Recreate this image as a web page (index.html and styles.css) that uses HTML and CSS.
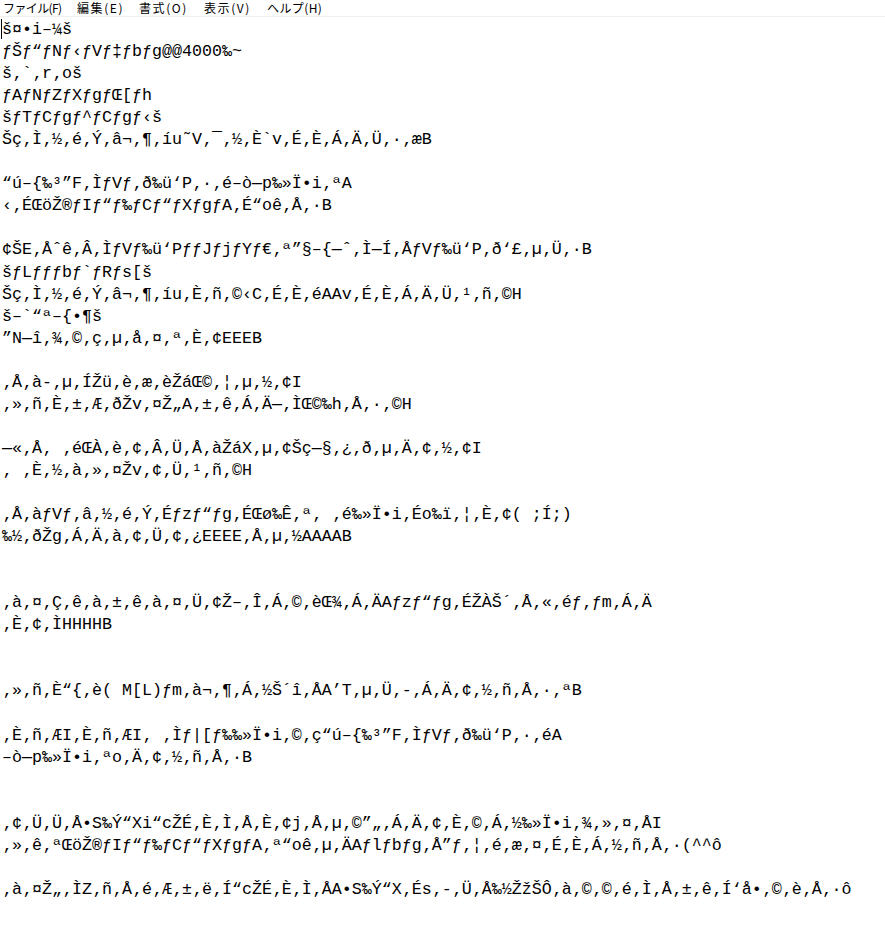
FILE: index.html
```html
<!DOCTYPE html>
<html lang="ja">
<head>
    <meta charset="UTF-8">
    <title>メモ帳</title>
    <link rel="stylesheet" href="styles.css">
</head>
<body>
<div class="window">
    <div class="menu">
        <span class="menu-item file">ファイル(F)</span>
        <span class="menu-item edit">編集(E)</span>
        <span class="menu-item format">書式(O)</span>
        <span class="menu-item view">表示(V)</span>
        <span class="menu-item help">ヘルプ(H)</span>
    </div>

    <div class="editor"><span class="caret"></span>š¤•i–¼š
ƒŠƒ“ƒNƒ‹ƒVƒ‡ƒbƒg@@4000‰~
š‚`‚r‚oš
ƒAƒNƒZƒXƒgƒŒ[ƒh
šƒTƒCƒgƒ^ƒCƒgƒ‹š
Šç‚Ì‚½‚é‚Ý‚â¬‚¶‚íu˜V‚¯‚½‚È`v‚É‚È‚Á‚Ä‚Ü‚·‚æB

“ú–{‰³”F‚ÌƒVƒ‚ð‰ü‘P‚·‚é–ò—p‰»Ï•i‚ªA
‹‚ÉŒöŽ®ƒIƒ“ƒ‰ƒCƒ“ƒXƒgƒA‚É“oê‚Å‚·B

¢ŠE‚Åˆê‚Â‚ÌƒVƒ‰ü‘PƒƒJƒjƒYƒ€‚ª”§–{—ˆ‚Ì—Í‚ÅƒVƒ‰ü‘P‚ð‘£‚µ‚Ü‚·B
šƒLƒƒƒbƒ`ƒRƒs[š
Šç‚Ì‚½‚é‚Ý‚â¬‚¶‚íu‚È‚ñ‚©‹C‚É‚È‚éAAv‚É‚È‚Á‚Ä‚Ü‚¹‚ñ‚©H
š–`“ª–{•¶š
”N—î‚¾‚©‚ç‚µ‚å‚¤‚ª‚È‚¢EEEB

‚Å‚à-‚µ‚ÍŽü‚è‚æ‚èŽáŒ©‚¦‚µ‚½‚¢I
‚»‚ñ‚È‚±‚Æ‚ðŽv‚¤Ž„A‚±‚ê‚Á‚Ä—‚ÌŒ©‰h‚Å‚·‚©H

—«‚Å‚ ‚éŒÀ‚è‚¢‚Â‚Ü‚Å‚àŽáX‚µ‚¢Šç—§‚¿‚ð‚µ‚Ä‚¢‚½‚¢I
‚ ‚È‚½‚à‚»‚¤Žv‚¢‚Ü‚¹‚ñ‚©H

‚Å‚àƒVƒ‚â‚½‚é‚Ý‚Éƒzƒ“ƒg‚ÉŒø‰Ê‚ª‚ ‚é‰»Ï•i‚Éo‰ï‚¦‚È‚¢( ;Í;)
‰½‚ðŽg‚Á‚Ä‚à‚¢‚Ü‚¢‚¿EEEE‚Å‚µ‚½AAAAB


‚à‚¤‚Ç‚ê‚à‚±‚ê‚à‚¤‚Ü‚¢Ž–‚Î‚Á‚©‚èŒ¾‚Á‚ÄAƒzƒ“ƒg‚ÉŽÀŠ´‚Å‚«‚éƒ‚ƒm‚Á‚Ä
‚È‚¢‚ÌHHHHB


‚»‚ñ‚È“{‚è( M[L)ƒm‚à¬‚¶‚Á‚½Š´î‚ÅA’T‚µ‚Ü‚-‚Á‚Ä‚¢‚½‚ñ‚Å‚·‚ªB

‚È‚ñ‚ÆI‚È‚ñ‚ÆI‚ ‚Ìƒ|[ƒ‰‰»Ï•i‚©‚ç“ú–{‰³”F‚ÌƒVƒ‚ð‰ü‘P‚·‚éA
–ò—p‰»Ï•i‚ªo‚Ä‚¢‚½‚ñ‚Å‚·B


‚¢‚Ü‚Ü‚Å•S‰Ý“Xi“cŽÉ‚È‚Ì‚Å‚È‚¢j‚Å‚µ‚©”„‚Á‚Ä‚¢‚È‚©‚Á‚½‰»Ï•i‚¾‚»‚¤‚ÅI
‚»‚ê‚ªŒöŽ®ƒIƒ“ƒ‰ƒCƒ“ƒXƒgƒA‚ª“oê‚µ‚ÄAƒlƒbƒg‚Å”ƒ‚¦‚é‚æ‚¤‚É‚È‚Á‚½‚ñ‚Å‚·(^^ô

‚à‚¤Ž„‚ÌZ‚ñ‚Å‚é‚Æ‚±‚ë‚Í“cŽÉ‚È‚Ì‚ÅA•S‰Ý“X‚És‚-‚Ü‚Å‰½ŽžŠÔ‚à‚©‚©‚é‚Ì‚Å‚±‚ê‚Í‘å•‚©‚è‚Å‚·ô</div>
</div>
</body>
</html>
```

FILE: styles.css
```css
body {
    margin: 0;
    padding: 0;
    background-color: #ffffff;
}

.window {
    width: 885px;
    height: 952px;
    overflow: hidden;
    background-color: #ffffff;
}

/* barra de menu */
.menu {
    display: flex;
    height: 16px;
    padding-left: 3px;
    border-bottom: 1px solid #f0f0f0;
    font-family: "Noto Sans CJK JP", sans-serif;
    font-size: 12px;
    line-height: 15px;
    color: #000000;
}

.menu-item {
    white-space: nowrap;
}

.file { width: 74px; letter-spacing: -0.6px; }
.edit { width: 62px; letter-spacing: 1.6px; }
.format { width: 65px; letter-spacing: 1.6px; }
.view { width: 63px; letter-spacing: 1.6px; }
.help { width: 60px; letter-spacing: 0.4px; }

/* area de texto */
.editor {
    white-space: pre;
    padding-top: 2px;
    padding-left: 2px;
    font-family: "Liberation Mono", monospace;
    font-size: 16.67px;
    line-height: 22.05px;
    color: #000000;
}

.caret {
    display: inline-block;
    width: 1px;
    height: 20px;
    margin-left: -1px;
    background-color: #000000;
    vertical-align: -5px;
}
```
